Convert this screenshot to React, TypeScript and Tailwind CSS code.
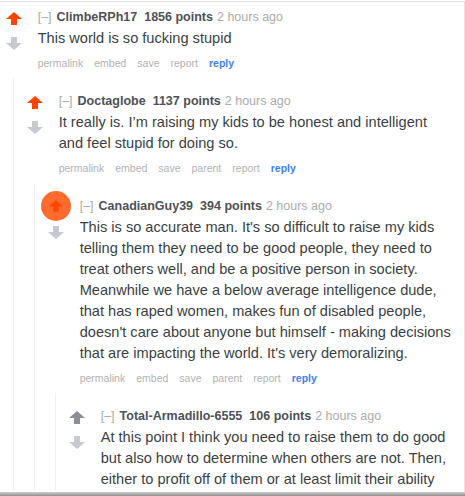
import type { ReactNode } from "react";

type Vote = "up" | "pressed" | "neutral";

type CommentData = {
  author: string;
  points: number;
  body: string;
  vote: Vote;
  parent?: boolean;
  // last comment is cut by the window edge, its links are below the fold
  folded?: boolean;
  reply?: CommentData;
};

const thread: CommentData = {
  author: "ClimbeRPh17",
  points: 1856,
  body: "This world is so fucking stupid",
  vote: "up",
  reply: {
    author: "Doctaglobe",
    points: 1137,
    body: "It really is. I\u2019m raising my kids to be honest and intelligent and feel stupid for doing so.",
    vote: "up",
    parent: true,
    reply: {
      author: "CanadianGuy39",
      points: 394,
      body: "This is so accurate man. It's so difficult to raise my kids telling them they need to be good people, they need to treat others well, and be a positive person in society. Meanwhile we have a below average intelligence dude, that has raped women, makes fun of disabled people, doesn't care about anyone but himself - making decisions that are impacting the world. It's very demoralizing.",
      vote: "pressed",
      parent: true,
      reply: {
        author: "Total-Armadillo-6555",
        points: 106,
        body: "At this point I think you need to raise them to do good but also how to determine when others are not. Then, either to profit off of them or at least limit their ability",
        vote: "neutral",
        parent: true,
        folded: true,
      },
    },
  },
};

function Arrow({ down, className }: { down?: boolean; className?: string }) {
  return (
    <svg
      viewBox="0 0 16 13"
      className={className}
      fill="currentColor"
      aria-hidden="true"
    >
      <path
        d="M8 0 L16 7 H11 V13 H5 V7 H0 Z"
        transform={down ? "rotate(180 8 6.5)" : undefined}
      />
    </svg>
  );
}

function VoteColumn({ vote }: { vote: Vote }) {
  return (
    <div className="relative flex w-4 shrink-0 flex-col items-center pt-[4px]">
      {vote === "pressed" ? (
        <div className="relative h-[13px] w-4">
          <div className="absolute left-[-7px] top-[-10px] flex h-[30px] w-[30px] items-center justify-center rounded-full bg-[#ff6b2d]">
            <Arrow className="h-[12px] w-[14px] text-[#ff4500]" />
          </div>
        </div>
      ) : (
        <Arrow
          className={
            vote === "up"
              ? "h-[13px] w-4 text-[#ff4500]"
              : "h-[13px] w-4 text-[#8b9096]"
          }
        />
      )}
      <Arrow down className="mt-[12px] h-[13px] w-4 text-[#c6cad0]" />
    </div>
  );
}

function ActionLink({ children, strong }: { children: ReactNode; strong?: boolean }) {
  return (
    <span className={strong ? "font-bold text-[#3d82f2]" : "text-[#b2b2b2]"}>
      {children}
    </span>
  );
}

function Comment({ data, root }: { data: CommentData; root?: boolean }) {
  return (
    <div>
      <div className={`flex pl-[6px] ${root ? "pt-[6px]" : "pt-[7px]"}`}>
        <VoteColumn vote={data.vote} />
        <div className="ml-[15.7px] min-w-0 flex-1">
          <div className="flex items-baseline text-[12.5px] leading-[18px] whitespace-nowrap">
            <span className="text-[#ababab]">[–]</span>
            <span className="ml-[5px] font-bold text-[#4e5156]">
              {data.author}
            </span>
            <span className="ml-[7px] font-bold text-[#4e5156]">
              {data.points} points
            </span>
            <span className="ml-[4px] text-[#ababab]">2 hours ago</span>
          </div>
          <p className="mt-[2px] text-[14.6px] leading-[21px] text-[#3a3f45]">
            {data.body}
          </p>
          {!data.folded && (
            <div className="mt-[6px] flex gap-[11px] text-[10.5px] leading-4">
              <ActionLink>permalink</ActionLink>
              <ActionLink>embed</ActionLink>
              <ActionLink>save</ActionLink>
              {data.parent && <ActionLink>parent</ActionLink>}
              <ActionLink>report</ActionLink>
              <ActionLink strong>reply</ActionLink>
            </div>
          )}
        </div>
      </div>
      {data.reply && (
        <div className="ml-[13px] mt-[7px] border-l border-[#efefef] pl-[7px] pt-[7px]">
          <Comment data={data.reply} />
        </div>
      )}
    </div>
  );
}

export default function App() {
  return (
    <div className="flex h-[496px] w-[465px] flex-col overflow-hidden bg-white font-['Liberation_Sans',Arial,sans-serif]">
      <div className="mt-px min-h-0 flex-1 overflow-hidden border-r border-t border-[#e4e4e4] pr-[12px]">
        <Comment data={thread} root />
      </div>
      <div className="h-[4px] shrink-0 bg-gradient-to-b from-[#d2d2d2] to-[#8e8e8e]" />
    </div>
  );
}
